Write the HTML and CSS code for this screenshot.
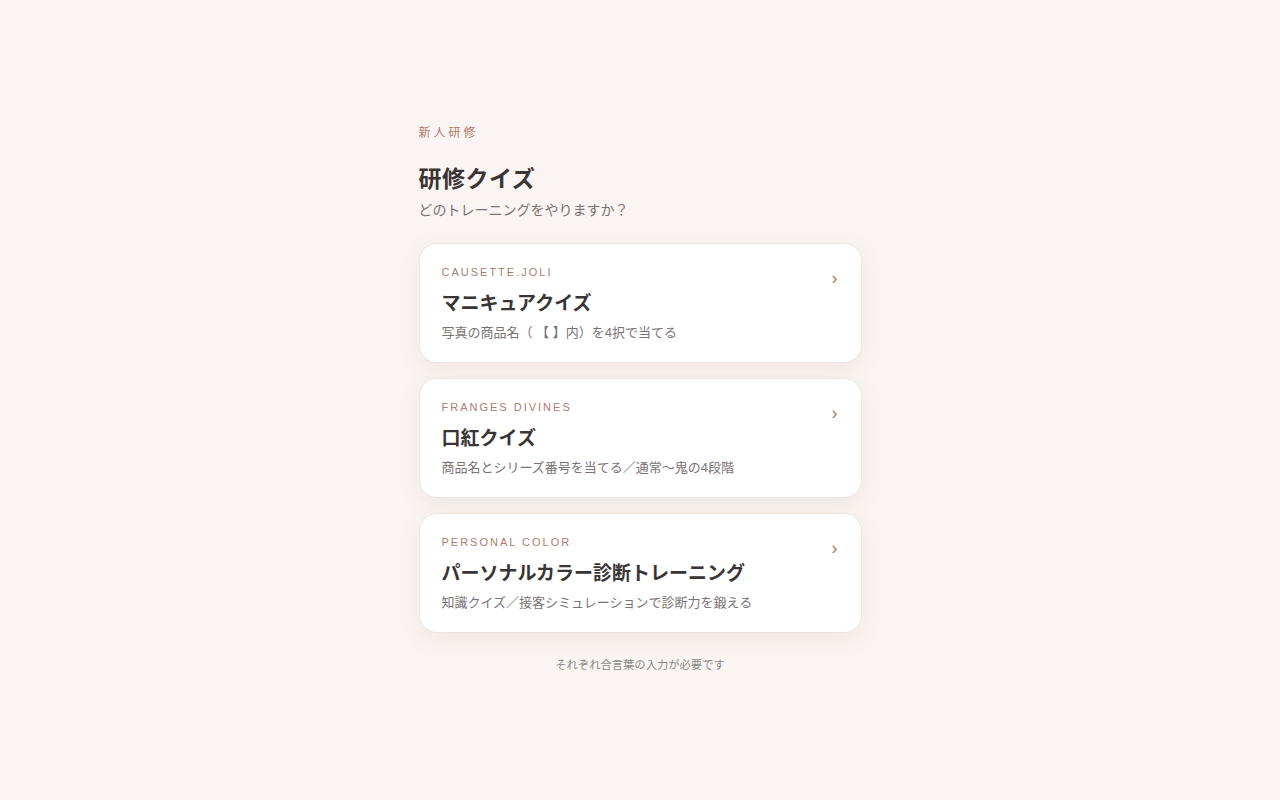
FILE: index.html
```html
<!DOCTYPE html><html lang="ja">
<head>
  <meta charset="UTF-8">
  <title>研修クイズ</title>
  <link rel="stylesheet" href="styles.css">
</head>
<body>
  <main class="page">
    <div class="eyebrow">新人研修</div>
    <h1 class="title">研修クイズ</h1>
    <p class="lead">どのトレーニングをやりますか？</p>
    <div class="menu">
      <a class="card" href="#">
        <div class="card-text">
          <div class="card-label">CAUSETTE.JOLI</div>
          <div class="card-title">マニキュアクイズ</div>
          <div class="card-desc">写真の商品名（ 【 】内）を4択で当てる</div>
        </div>
        <span class="chevron">›</span>
      </a>
      <a class="card" href="#">
        <div class="card-text">
          <div class="card-label">FRANGES DIVINES</div>
          <div class="card-title">口紅クイズ</div>
          <div class="card-desc">商品名とシリーズ番号を当てる／通常〜鬼の4段階</div>
        </div>
        <span class="chevron">›</span>
      </a>
      <a class="card" href="#">
        <div class="card-text">
          <div class="card-label">PERSONAL COLOR</div>
          <div class="card-title">パーソナルカラー診断トレーニング</div>
          <div class="card-desc">知識クイズ／接客シミュレーションで診断力を鍛える</div>
        </div>
        <span class="chevron">›</span>
      </a>
    </div>
    <p class="note">それぞれ合言葉の入力が必要です</p>
  </main>
</body>
</html>
```

FILE: styles.css
```css
* { box-sizing: border-box; font-family: "Liberation Sans", "Noto Sans CJK JP", sans-serif; }
html, body { margin: 0; min-height: 100%; background: #faf5f2; }
.page { width: 443px; margin: 0 auto; padding-top: 125px; }
.eyebrow { font-size: 12px; letter-spacing: 3px; color: #b07a6e; line-height: 16px; }
.title { margin: 23px 0 0; font-size: 23px; font-weight: bold; letter-spacing: 0.5px; color: #3a3434; line-height: 30px; }
.lead { margin: 6px 0 0; font-size: 14px; color: #7a7272; line-height: 20px; }
.menu { display: flex; flex-direction: column; gap: 15px; margin-top: 23px; }
.card { display: flex; justify-content: space-between; align-items: flex-start; height: 120px; padding: 21px 22px 0; background: #fff; border: 1px solid #efe6e2; border-radius: 18px; box-shadow: 0 6px 22px rgba(150, 110, 95, 0.10); text-decoration: none; }
.card-label { font-size: 11px; letter-spacing: 2px; color: #b07a6e; line-height: 14px; }
.card-title { margin-top: 12px; font-size: 19px; font-weight: bold; color: #3a3434; line-height: 26px; }
.card-desc { margin-top: 7px; font-size: 13px; color: #7a7272; line-height: 18px; }
.chevron { margin-top: 2px; margin-right: 1px; font-size: 18px; color: #b07a6e; line-height: 22px; }
.note { margin: 24px 0 0; text-align: center; font-size: 11.3px; color: #888; line-height: 16px; }
```
